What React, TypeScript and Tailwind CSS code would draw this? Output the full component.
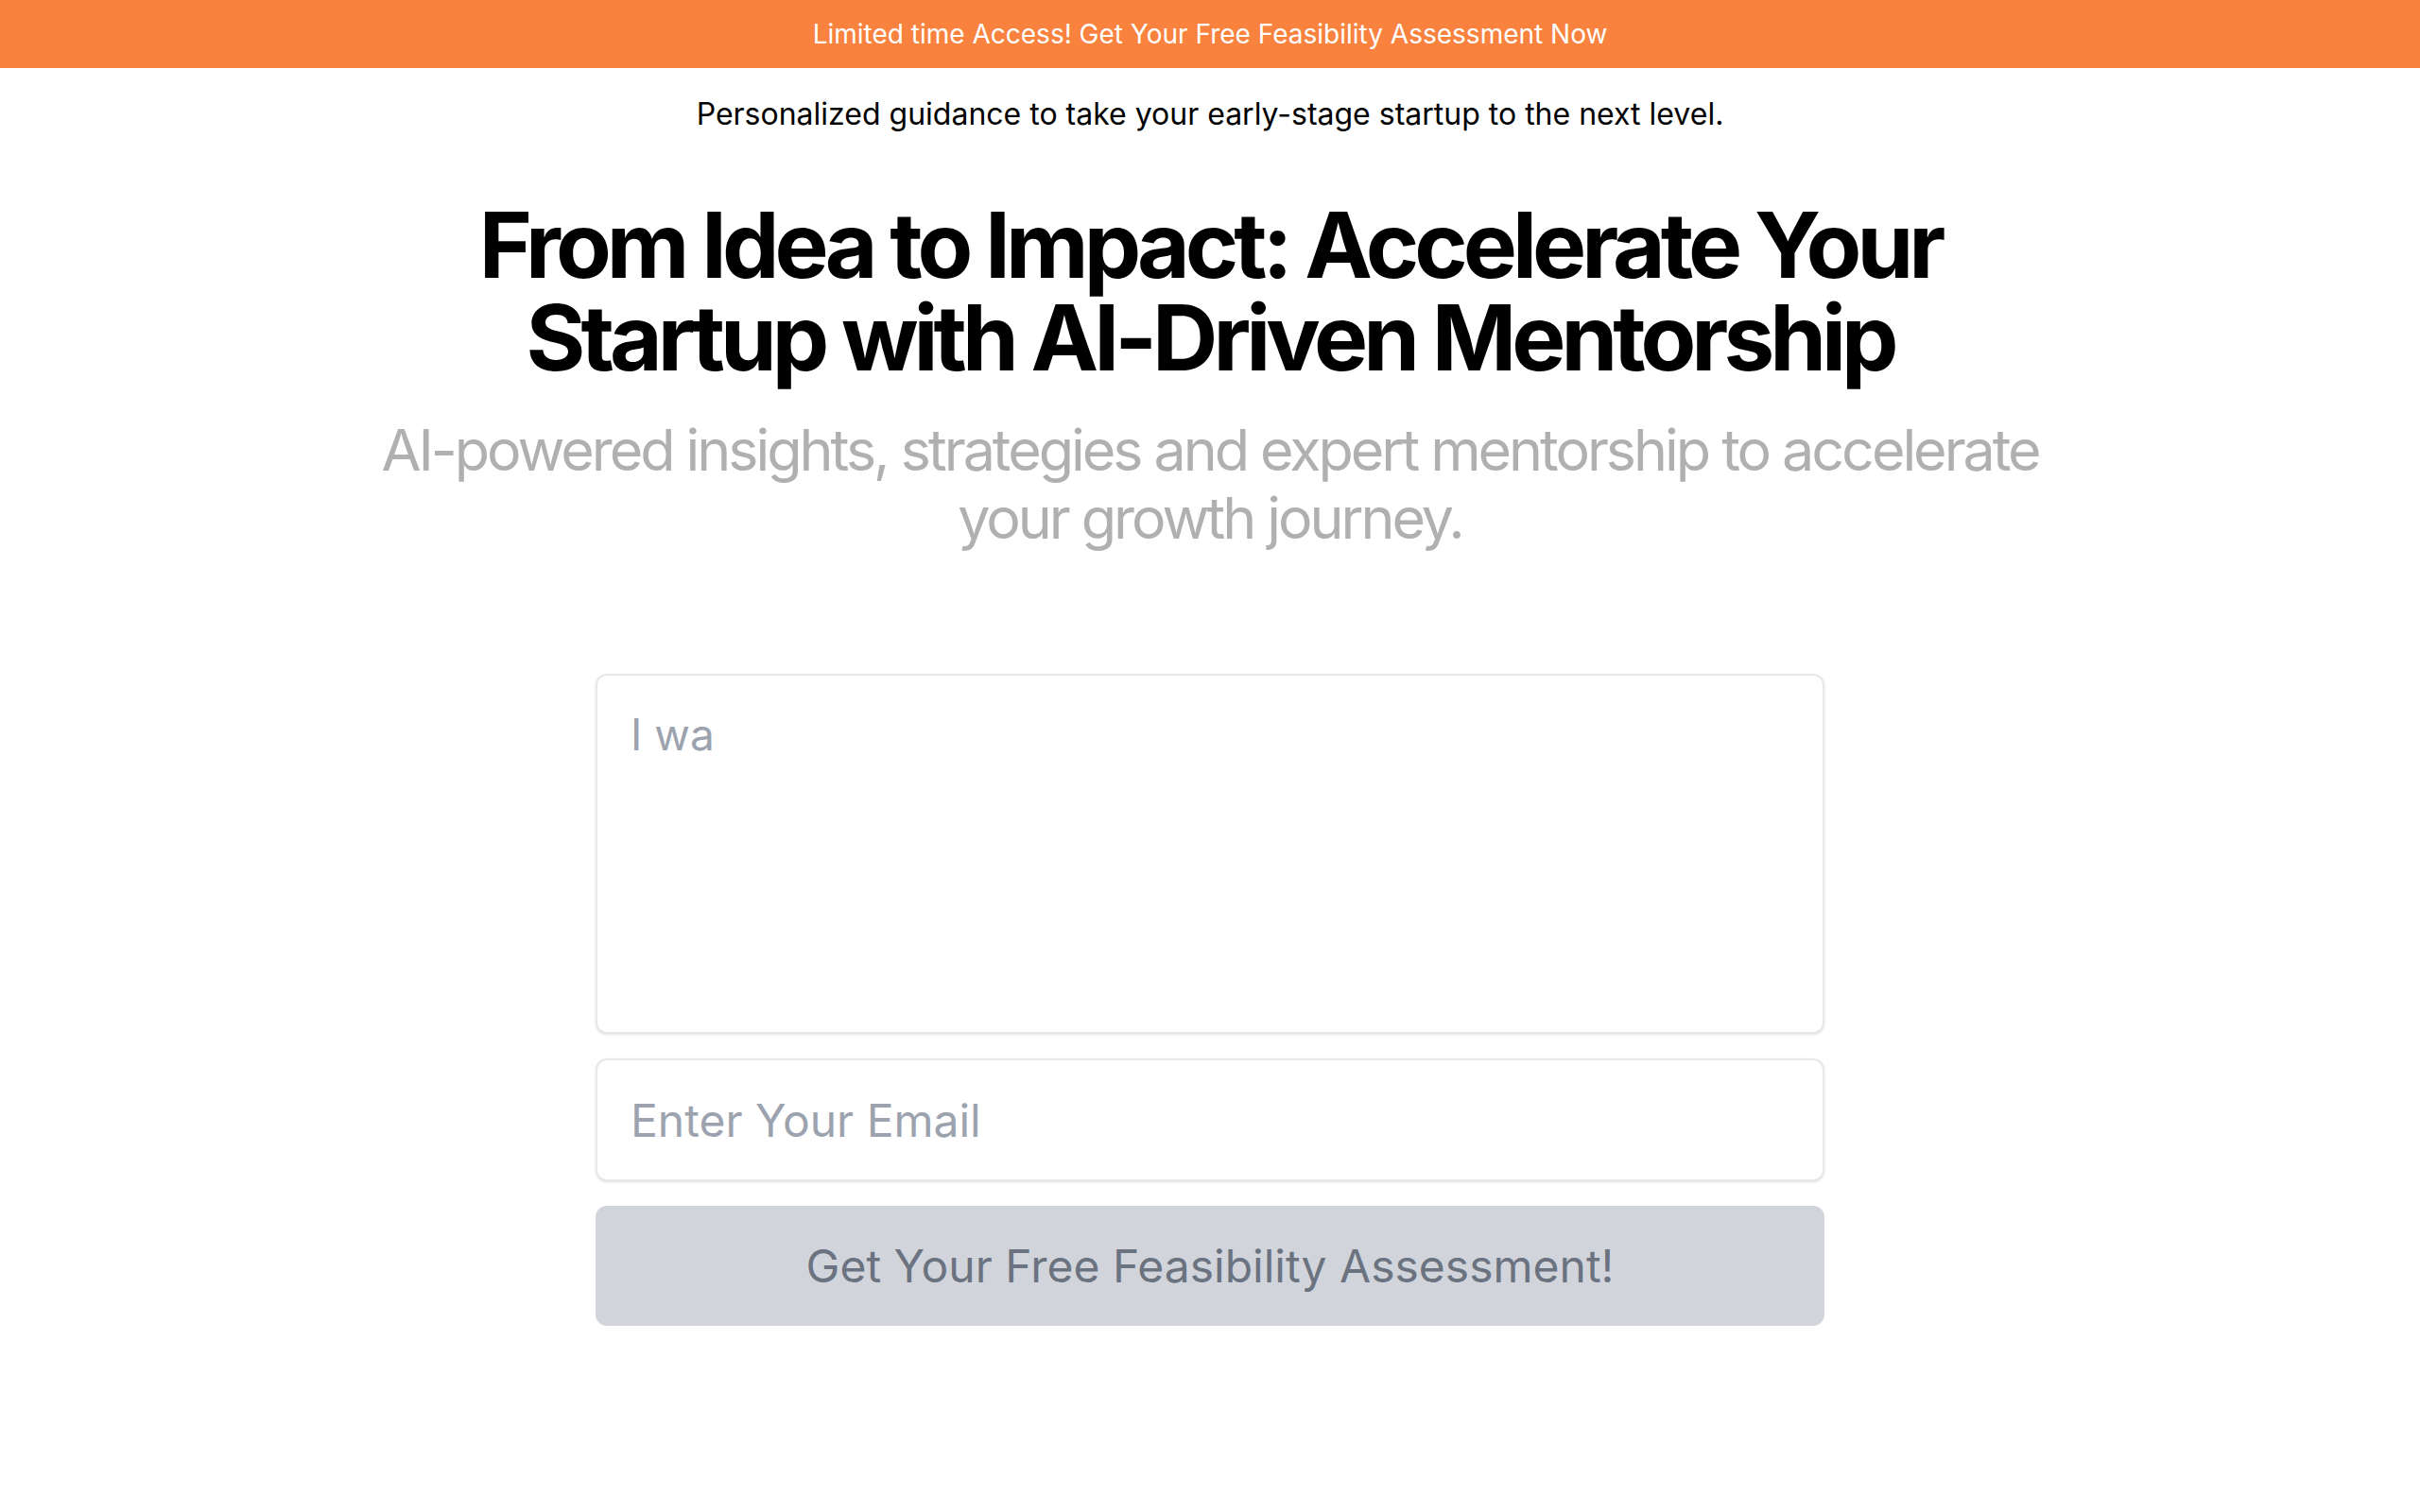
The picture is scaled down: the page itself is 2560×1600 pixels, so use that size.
import React from "react";

const font = { fontFamily: "Inter, 'Noto Sans', sans-serif" };

export default function App() {
    return (
        <div className="min-h-screen bg-white flex flex-col items-center" style={font}>
            <div className="w-full h-[72px] bg-[#f8823e] flex items-center justify-center">
                <p className="text-[28px] text-white">
                    Limited time Access! Get Your Free Feasibility Assessment Now
                </p>
            </div>

            <p className="mt-[28px] text-[32px] leading-[42px] text-black">
                Personalized guidance to take your early-stage startup to the next level.
            </p>

            <h1 className="mt-[68px] max-w-[1640px] text-center text-[96px] leading-[98px] font-bold tracking-[-0.052em] text-black">
                From Idea to Impact: Accelerate Your Startup with AI-Driven Mentorship
            </h1>

            <p className="mt-[34px] max-w-[1800px] text-center text-[61px] leading-[72px] tracking-[-0.05em] text-[#b0b0b0]">
                AI-powered insights, strategies and expert mentorship to accelerate your growth journey.
            </p>

            <form className="mt-[129px] w-[1300px] flex flex-col gap-[26px]">
                <textarea
                    placeholder="I wa"
                    className="h-[381px] w-full resize-none rounded-xl border-2 border-[#e8e8e8] bg-white px-[35px] pt-[34px] text-[46px] leading-[56px] text-gray-700 placeholder:text-[#9ca3af] shadow-sm outline-none"
                />
                <input
                    type="email"
                    placeholder="Enter Your Email"
                    className="h-[130px] w-full rounded-xl border-2 border-[#e8e8e8] bg-white px-[35px] text-[48px] text-gray-700 placeholder:text-[#9ca3af] shadow-sm outline-none"
                />
                <button
                    type="button"
                    className="h-[127px] w-full rounded-xl bg-[#d1d5db] text-[48px] text-[#6b7280]"
                >
                    Get Your Free Feasibility Assessment!
                </button>
            </form>
        </div>
    );
}
